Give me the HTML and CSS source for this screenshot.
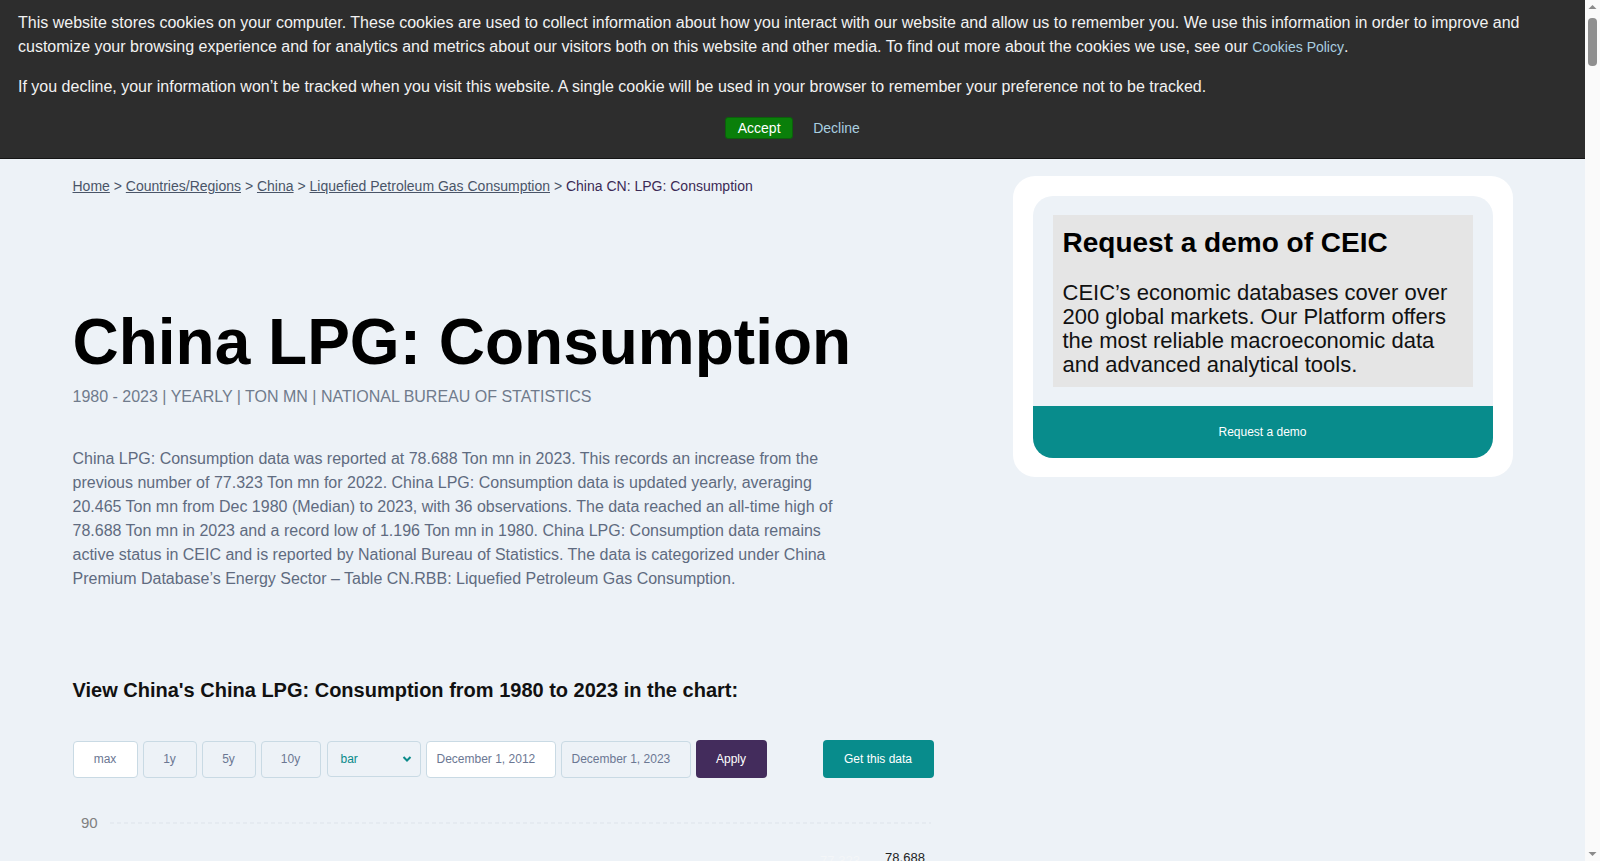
FILE: index.html
```html
<!DOCTYPE html>
<html>

<head>
  <meta name="viewport" content="width=device-width,initial-scale=1.0">
  <meta charset="utf-8">
  <title>China LPG: Consumption</title>
  <link rel="stylesheet" href="styles.css">
</head>

<body>
  <div class="site">
    <!-- cookie banner -->
    <div class="cookie">
      <p>This website stores cookies on your computer. These cookies are used to collect information about how you interact with our website and allow us to remember you. We use this information in order to improve and customize your browsing experience and for analytics and metrics about our visitors both on this website and other media. To find out more about the cookies we use, see our <a href="#">Cookies Policy</a>.</p>
      <p>If you decline, your information won’t be tracked when you visit this website. A single cookie will be used in your browser to remember your preference not to be tracked.</p>
      <div class="cookie-btns">
        <button class="accept">Accept</button>
        <a href="#" class="decline">Decline</a>
      </div>
    </div>

    <div class="page">
      <div class="main">
        <div class="crumbs">
          <a href="#">Home</a> &gt; <a href="#">Countries/Regions</a> &gt; <a href="#">China</a> &gt;
          <a href="#">Liquefied Petroleum Gas Consumption</a> &gt; <span class="current">China CN: LPG: Consumption</span>
        </div>

        <h1>China LPG: Consumption</h1>
        <div class="meta">1980 - 2023 | YEARLY | TON MN | NATIONAL BUREAU OF STATISTICS</div>

        <p class="desc">China LPG: Consumption data was reported at 78.688 Ton mn in 2023. This records an increase from the previous number of 77.323 Ton mn for 2022. China LPG: Consumption data is updated yearly, averaging 20.465 Ton mn from Dec 1980 (Median) to 2023, with 36 observations. The data reached an all-time high of 78.688 Ton mn in 2023 and a record low of 1.196 Ton mn in 1980. China LPG: Consumption data remains active status in CEIC and is reported by National Bureau of Statistics. The data is categorized under China Premium Database’s Energy Sector – Table CN.RBB: Liquefied Petroleum Gas Consumption.</p>

        <h2>View China's China LPG: Consumption from 1980 to 2023 in the chart:</h2>

        <div class="controls">
          <button class="ctl active w-max">max</button>
          <button class="ctl w-1y">1y</button>
          <button class="ctl w-1y">5y</button>
          <button class="ctl w-10y">10y</button>
          <div class="ctl sel">
            <span>bar</span>
            <svg width="10" height="8" viewBox="0 0 10 8"><path d="M1.5 2 L5 5.5 L8.5 2" fill="none" stroke="#0a8a8a" stroke-width="2"/></svg>
          </div>
          <div class="ctl date active">December 1, 2012</div>
          <div class="ctl date">December 1, 2023</div>
          <button class="apply">Apply</button>
          <button class="getdata">Get this data</button>
        </div>

        <div class="chart">
          <svg width="860" height="420" viewBox="0 0 860 420">
            <text x="8" y="23" class="axis">90</text>
            <line x1="37" y1="18" x2="858" y2="18" stroke="#dde3ea" stroke-dasharray="4 3"/>
            <text x="8" y="123" class="axis">60</text>
            <line x1="37" y1="118" x2="858" y2="118" stroke="#dde3ea" stroke-dasharray="4 3"/>
            <text x="8" y="223" class="axis">30</text>
            <line x1="37" y1="218" x2="858" y2="218" stroke="#dde3ea" stroke-dasharray="4 3"/>
            <text x="14" y="323" class="axis">0</text>
            <line x1="37" y1="318" x2="858" y2="318" stroke="#cfd6de"/>
            <rect x="744" y="66" width="46" height="252" fill="#0a8a8a"/>
            <text x="767" y="60" text-anchor="middle" class="val light">77.323</text>
            <rect x="809" y="62" width="46" height="256" fill="#0a8a8a"/>
            <text x="832" y="57" text-anchor="middle" class="val">78.688</text>
          </svg>
        </div>
      </div>

      <div class="side">
        <div class="demo">
          <div class="demo-inner">
            <div class="demo-text">
              <h3>Request a demo of CEIC</h3>
              <p>CEIC’s economic databases cover over 200 global markets. Our Platform offers the most reliable macroeconomic data and advanced analytical tools.</p>
            </div>
            <a href="#" class="demo-btn">Request a demo</a>
          </div>
        </div>
      </div>
    </div>
  </div>

  <!-- browser scrollbar -->
  <div class="scrollbar">
    <svg class="arrow" width="15" height="14" viewBox="0 0 15 14"><path d="M3.5 9 L7.5 5 L11.5 9 Z" fill="#8a8a8a"/></svg>
    <div class="thumb"></div>
    <svg class="arrow down" width="15" height="14" viewBox="0 0 15 14"><path d="M3.5 5 L7.5 9 L11.5 5 Z" fill="#8a8a8a"/></svg>
  </div>
</body>

</html>
```

FILE: styles.css
```css
* {
  box-sizing: border-box;
}

body {
  margin: 0;
  background-color: #edf2f7;
  font-family: "Liberation Sans", Arial, sans-serif;
  color: #1a1a1a;
  overflow: hidden;
}

.site {
  width: 1585px;
  min-height: 2000px;
}

/* cookie banner */
.cookie {
  background-color: #2d2d2d;
  color: #f2f2f2;
  padding: 11px 18px 19px 18px;
  border-bottom: 1px solid #151515;
  font-size: 16px;
  line-height: 24px;
}

.cookie p {
  margin: 0 0 16px 0;
}

.cookie p:last-of-type {
  margin-bottom: 18px;
}

.cookie a {
  color: #a9cfe0;
  text-decoration: none;
  font-size: 14px;
}

.cookie-btns {
  display: flex;
  justify-content: center;
  align-items: center;
  gap: 20px;
  height: 22px;
}

.accept {
  background-color: #0a7f0a;
  color: #fff;
  border: 1px solid #0c5f0c;
  border-radius: 3px;
  font-family: inherit;
  font-size: 14px;
  width: 68px;
  height: 22px;
  padding: 0;
}

/* page layout */
.page {
  width: 1440px;
  margin: 0 auto;
  padding-top: 17px;
  display: grid;
  grid-template-columns: 860px 500px;
  justify-content: space-between;
  align-items: start;
}

.crumbs {
  font-size: 14px;
  line-height: 20px;
  color: #4a5568;
}

.crumbs a {
  color: #4a5568;
}

.crumbs .current {
  color: #3b2a55;
}

h1 {
  font-size: 64px;
  font-weight: 700;
  line-height: 76px;
  margin: 108px 0 0 0;
  color: #000;
}

.meta {
  font-size: 16px;
  line-height: 20px;
  color: #707b8c;
  margin-top: 7px;
}

.desc {
  width: 774px;
  font-size: 16px;
  line-height: 24px;
  color: #5f6b80;
  margin: 40px 0 0 0;
}

h2 {
  font-size: 20px;
  line-height: 26px;
  font-weight: 700;
  margin: 86px 0 0 0;
  color: #111;
}

.controls {
  display: flex;
  align-items: center;
  margin-top: 37px;
  height: 38px;
}

.ctl {
  height: 37px;
  border: 1px solid #c9dae4;
  border-radius: 4px;
  background-color: #edf2f7;
  color: #6b7793;
  font-family: inherit;
  font-size: 12px;
  margin-right: 5px;
  padding: 0;
}

.ctl.active {
  background-color: #fff;
}

.w-max {
  width: 65px;
}

.w-1y {
  width: 54px;
}

.w-10y {
  width: 60px;
  margin-right: 6px;
}

.sel {
  width: 94px;
  height: 36px;
  display: flex;
  align-items: center;
  justify-content: space-between;
  padding: 0 8px 0 13px;
  color: #0a8a8a;
  font-size: 12px;
}

.date {
  width: 130px;
  display: flex;
  align-items: center;
  padding-left: 10px;
  font-size: 12px;
}

.apply {
  width: 71px;
  height: 38px;
  border: none;
  border-radius: 4px;
  background-color: #432c5c;
  color: #fff;
  font-family: inherit;
  font-size: 12px;
}

.getdata {
  width: 111px;
  height: 38px;
  border: none;
  border-radius: 4px;
  background-color: #088c8c;
  color: #fff;
  font-family: inherit;
  font-size: 12px;
  margin-left: auto;
  margin-right: -1px;
}

.chart {
  margin-top: 27px;
}

.chart svg {
  display: block;
}

.axis {
  font-family: "Liberation Sans", Arial, sans-serif;
  font-size: 15px;
  fill: #808080;
}

.val {
  font-family: "Liberation Sans", Arial, sans-serif;
  font-size: 13px;
  fill: #222;
}

.val.light {
  fill: #f4f6f8;
}

/* right column */
.demo {
  background-color: #fff;
  border-radius: 22px;
  padding: 20px;
  height: 301px;
}

.demo-inner {
  background-color: #edf2f7;
  border-radius: 20px;
  overflow: hidden;
}

.demo-text {
  background-color: #e5e5e5;
  margin: 19px 20px;
  padding: 12px 10px 10px 10px;
}

.demo-text h3 {
  font-size: 28px;
  line-height: 32px;
  margin: 0 0 22px 0;
  color: #000;
}

.demo-text p {
  font-size: 22px;
  line-height: 24px;
  margin: 0;
  color: #111;
}

.demo-btn {
  display: block;
  height: 52px;
  line-height: 52px;
  background-color: #088c8c;
  color: #fff;
  text-align: center;
  font-size: 12px;
  text-decoration: none;
}

/* fake scrollbar on the right edge */
.scrollbar {
  position: fixed;
  top: 0;
  right: 0;
  width: 15px;
  height: 100%;
  background-color: #fafafa;
  display: flex;
  flex-direction: column;
}

.scrollbar .arrow {
  display: block;
}

.scrollbar .thumb {
  width: 9px;
  height: 48px;
  margin: 4px 0 0 3px;
  border-radius: 4px;
  background-color: #8f8f8f;
}

.scrollbar .down {
  margin-top: auto;
}
```
